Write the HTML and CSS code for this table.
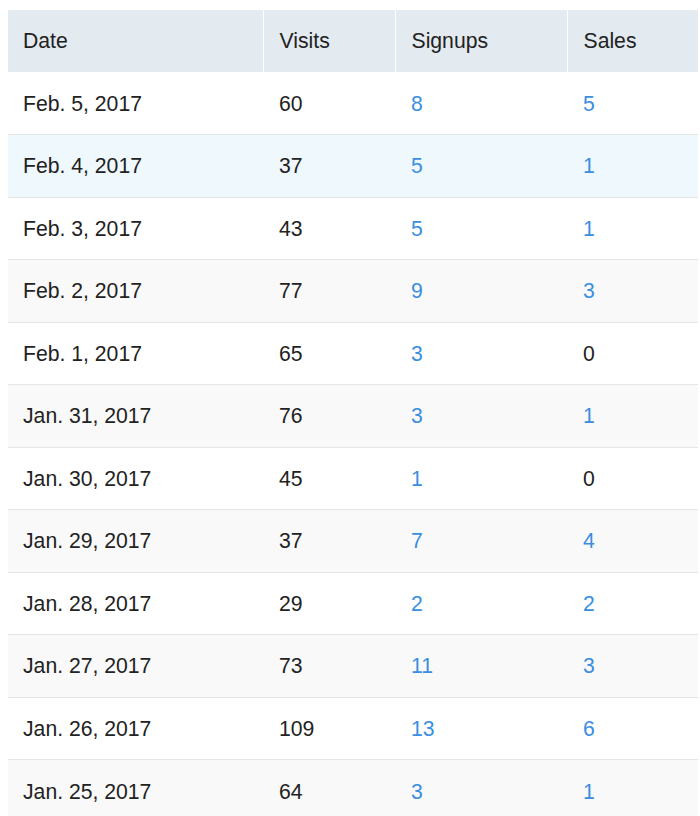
FILE: index.html
```html
<!DOCTYPE html>
<html>
<head>
<meta charset="utf-8">
<link rel="stylesheet" href="styles.css">
</head>
<body>
<table class="stats">
  <colgroup>
    <col class="c-date">
    <col class="c-visits">
    <col class="c-signups">
    <col class="c-sales">
  </colgroup>
  <thead>
    <tr><th>Date</th><th>Visits</th><th>Signups</th><th>Sales</th></tr>
  </thead>
  <tbody>
    <tr><td>Feb. 5, 2017</td><td>60</td><td><a href="#">8</a></td><td><a href="#">5</a></td></tr>
    <tr class="hover"><td>Feb. 4, 2017</td><td>37</td><td><a href="#">5</a></td><td><a href="#">1</a></td></tr>
    <tr><td>Feb. 3, 2017</td><td>43</td><td><a href="#">5</a></td><td><a href="#">1</a></td></tr>
    <tr><td>Feb. 2, 2017</td><td>77</td><td><a href="#">9</a></td><td><a href="#">3</a></td></tr>
    <tr><td>Feb. 1, 2017</td><td>65</td><td><a href="#">3</a></td><td>0</td></tr>
    <tr><td>Jan. 31, 2017</td><td>76</td><td><a href="#">3</a></td><td><a href="#">1</a></td></tr>
    <tr><td>Jan. 30, 2017</td><td>45</td><td><a href="#">1</a></td><td>0</td></tr>
    <tr><td>Jan. 29, 2017</td><td>37</td><td><a href="#">7</a></td><td><a href="#">4</a></td></tr>
    <tr><td>Jan. 28, 2017</td><td>29</td><td><a href="#">2</a></td><td><a href="#">2</a></td></tr>
    <tr><td>Jan. 27, 2017</td><td>73</td><td><a href="#">11</a></td><td><a href="#">3</a></td></tr>
    <tr><td>Jan. 26, 2017</td><td>109</td><td><a href="#">13</a></td><td><a href="#">6</a></td></tr>
    <tr><td>Jan. 25, 2017</td><td>64</td><td><a href="#">3</a></td><td><a href="#">1</a></td></tr>
  </tbody>
</table>
</body>
</html>
```
FILE: styles.css
```css
html, body {
  margin: 0;
  padding: 0;
  background: #ffffff;
}
body {
  padding: 10px 0 0 8px;
  font-family: "Liberation Sans", Arial, sans-serif;
  font-size: 21.2px;
  color: #222222;
}
.stats {
  border-collapse: collapse;
  width: 690px;
  table-layout: fixed;
}
.c-date { width: 255px; }
.c-visits { width: 132px; }
.c-signups { width: 172px; }
.c-sales { width: 131px; }
.stats th {
  background: #e3eaf0;
  font-weight: normal;
  text-align: left;
  height: 62px;
  padding: 0 0 0 16px;
  border-left: 1px solid #ffffff;
  box-sizing: border-box;
  vertical-align: middle;
}
.stats th:first-child {
  border-left: none;
  padding-left: 15px;
}
.stats td {
  height: 62.5px;
  padding: 1px 0 0 16px;
  border-top: 1px solid #e3e5e6;
  box-sizing: border-box;
  vertical-align: middle;
  line-height: 24px;
}
.stats td:first-child {
  padding-left: 15px;
}
.stats tbody tr:first-child td {
  border-top: none;
}
.stats tbody tr:nth-child(even) td {
  background: #f9f9f9;
}
.stats tbody tr.hover td {
  background: #eef8fd;
}
.stats a {
  color: #3a8ee0;
  text-decoration: none;
}
```
